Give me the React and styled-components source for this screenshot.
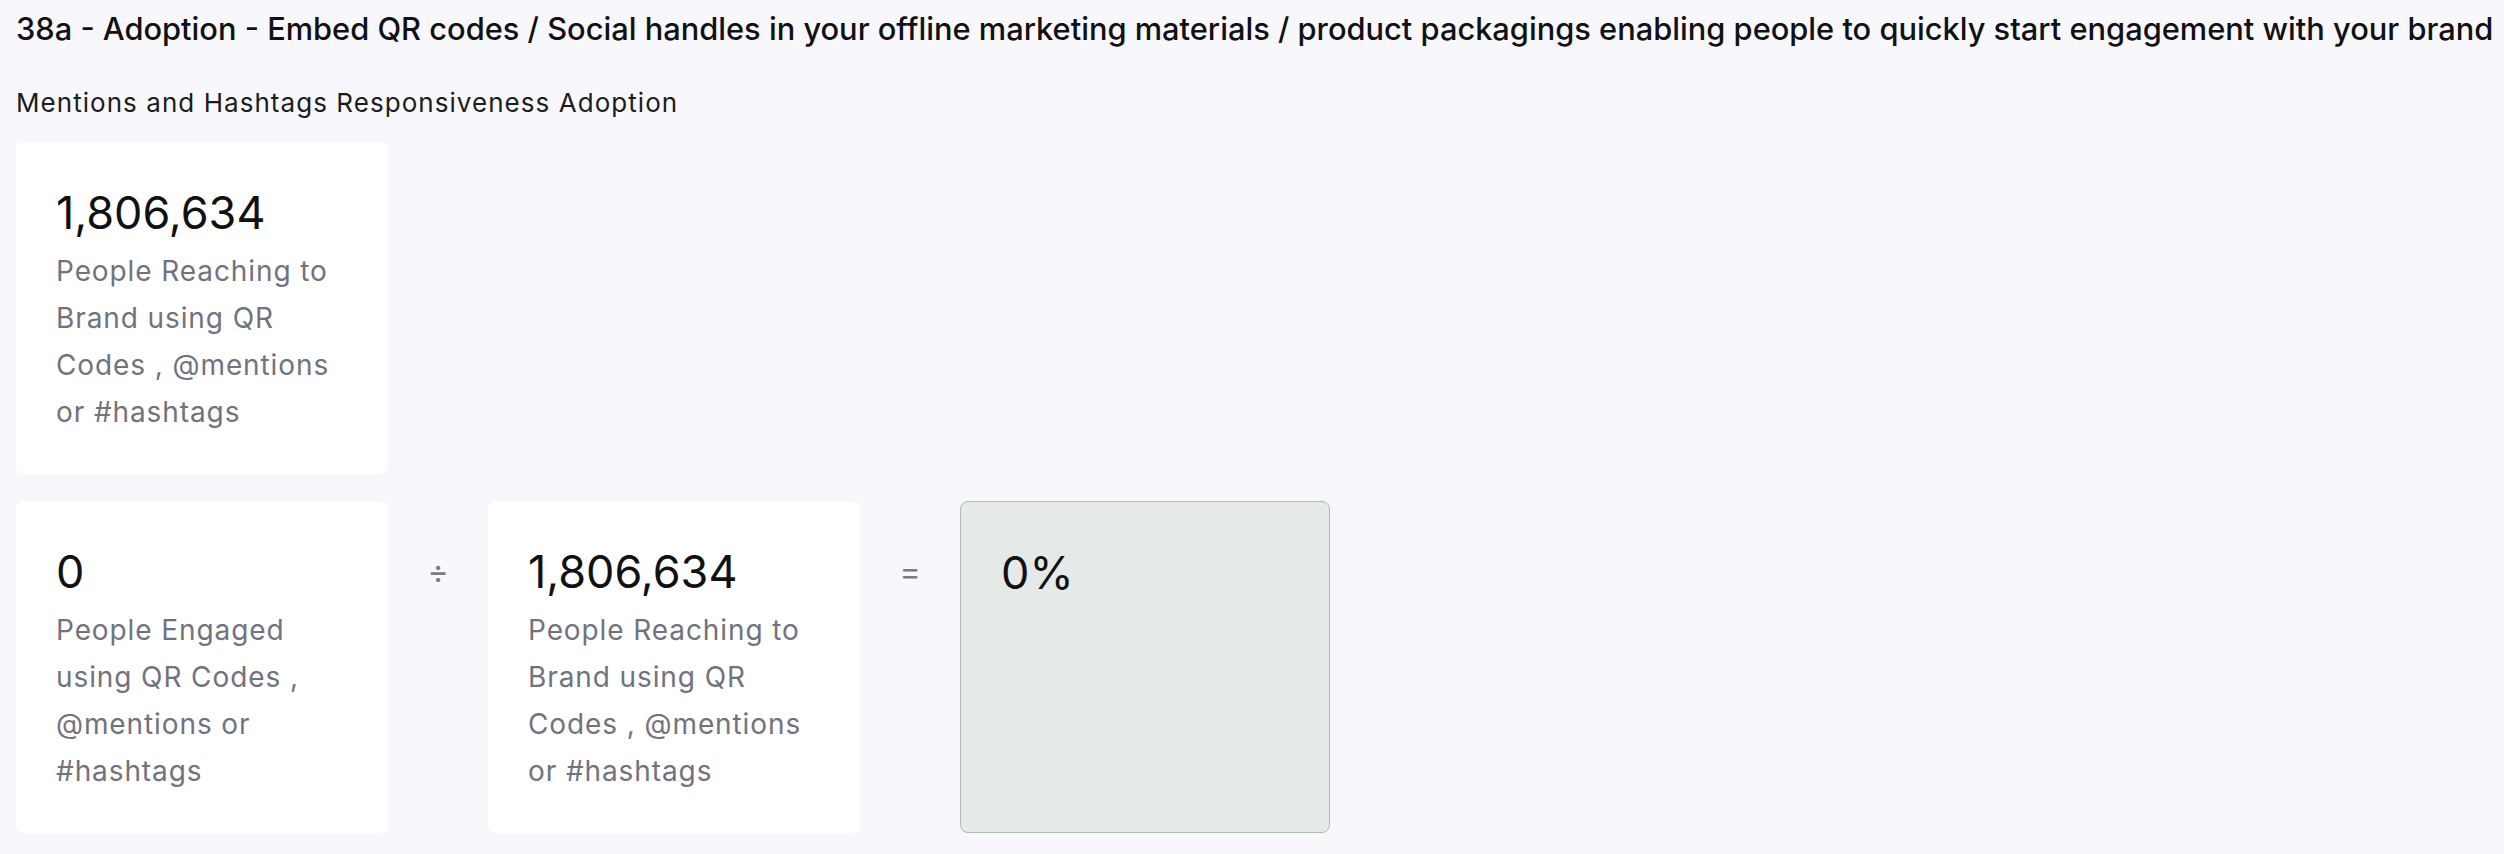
import styled, { createGlobalStyle } from 'styled-components'

const GlobalStyle = createGlobalStyle`
  html, body {
    margin: 0;
    padding: 0;
    background: #f8f8fc;
  }
  body {
    font-family: Inter, "Noto Sans", "Liberation Sans", sans-serif;
    color: #111114;
  }
`

const Page = styled.main`
  min-height: 854px;
  padding: 10px 16px 0;
  box-sizing: border-box;
`

const Title = styled.h1`
  margin: 0;
  font-size: 30.8px;
  font-weight: 500;
  line-height: 37px;
  color: #111114;
  white-space: nowrap;
`

const Subtitle = styled.h2`
  margin: 41px 0 0;
  font-size: 26px;
  font-weight: 400;
  letter-spacing: 1.05px;
  line-height: 30px;
  color: #1c1c20;
`

const Rows = styled.div`
  display: flex;
  flex-direction: column;
  gap: 27px;
  margin-top: 24px;
`

const Row = styled.div`
  display: flex;
  align-items: stretch;
`

const Card = styled.div`
  width: ${(props) => (props.result ? '370px' : '372px')};
  box-sizing: border-box;
  padding: 44px 40px 38px;
  border-radius: 8px;
  background: ${(props) => (props.result ? '#e5e9e7' : '#ffffff')};
  border: ${(props) => (props.result ? '1.5px solid #a8bfa8' : 'none')};
`

const Value = styled.div`
  font-size: 45px;
  line-height: 53px;
  font-weight: 400;
  color: #111114;
`

const Label = styled.div`
  margin-top: 9px;
  font-size: 28px;
  letter-spacing: 0.9px;
  line-height: 47px;
  color: #72727e;
`

const Operator = styled.div`
  width: 100px;
  padding-top: 44px;
  text-align: center;
  font-size: 32px;
  line-height: 53px;
  color: #7a7a88;
`

function Metric({ value, label, result }) {
  return (
    <Card result={result}>
      <Value>{value}</Value>
      {label && <Label>{label}</Label>}
    </Card>
  )
}

export default function App() {
  return (
    <>
      <GlobalStyle />
      <Page>
        <Title>
          38a - Adoption - Embed QR codes / Social handles in your offline marketing materials / product packagings enabling people to quickly start engagement with your brand
        </Title>
        <Subtitle>Mentions and Hashtags Responsiveness Adoption</Subtitle>
        <Rows>
          <Row>
            <Metric
              value="1,806,634"
              label="People Reaching to Brand using QR Codes , @mentions or #hashtags"
            />
          </Row>
          <Row>
            <Metric
              value="0"
              label="People Engaged using QR Codes , @mentions or #hashtags"
            />
            <Operator>÷</Operator>
            <Metric
              value="1,806,634"
              label="People Reaching to Brand using QR Codes , @mentions or #hashtags"
            />
            <Operator>=</Operator>
            <Metric value="0%" result />
          </Row>
        </Rows>
      </Page>
    </>
  )
}
